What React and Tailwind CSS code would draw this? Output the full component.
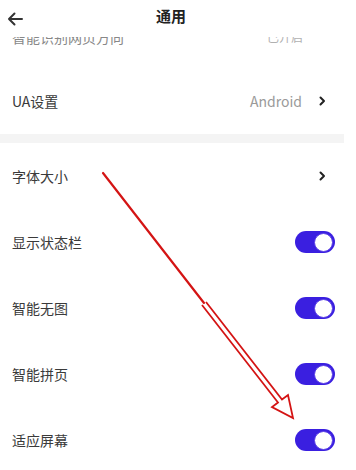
import React from "react";

const font = { fontFamily: '"Noto Sans CJK SC", "Noto Sans", sans-serif' };

function Chevron() {
  return (
    <svg width="7" height="10" viewBox="0 0 7 10" className="ml-[17px] mr-[9px]">
      <path d="M1.5 1.5 L5 5 L1.5 8.5" fill="none" stroke="#222" strokeWidth="2" strokeLinecap="round" strokeLinejoin="round" />
    </svg>
  );
}

function Toggle() {
  return (
    <div className="w-[40px] h-[22px] rounded-full bg-[#3a1fe0] flex items-center justify-end pr-[2px]">
      <div className="w-[19px] h-[19px] rounded-full bg-white border border-[#5a3fe6]" />
    </div>
  );
}

function Row({ label, right }) {
  return (
    <div className="h-[66px] flex items-center justify-between pl-[12px] pr-[21px]">
      <span className="text-[14px] text-[#3a3a3a]">{label}</span>
      {right}
    </div>
  );
}

export default function App() {
  return (
    <div className="relative w-[356px] h-[470px] bg-white overflow-hidden" style={font}>
      <div className="h-[37px] flex items-center relative bg-white">
        <svg width="18" height="16" viewBox="0 0 18 16" className="ml-[6px]">
          <path d="M16 8 H3 M8.5 2.5 L3 8 L8.5 13.5" fill="none" stroke="#333" strokeWidth="2" strokeLinecap="round" strokeLinejoin="round" />
        </svg>
        <span className="absolute left-0 right-0 text-center text-[15px] font-bold text-[#222] pr-[14px] leading-none top-[8px]">通用</span>
      </div>
      <div className="h-[31px] overflow-hidden flex flex-col justify-end">
        <div className="h-[66px] shrink-0 flex items-center justify-between pl-[12px] pr-[21px] pt-[4px]">
          <span className="text-[14px] text-[#888]">智能识别网页方向</span>
          <span className="text-[12px] text-[#b0b0b0] mr-[32px]">已开启</span>
        </div>
      </div>
      <Row
        label="UA设置"
        right={
          <div className="flex items-center">
            <span className="text-[14px] text-[#9a9a9a]">Android</span>
            <Chevron />
          </div>
        }
      />
      <div className="h-[9px] bg-[#f4f4f4] mr-[12px]" />
      <Row label="字体大小" right={<div className="flex items-center"><Chevron /></div>} />
      <Row label="显示状态栏" right={<Toggle />} />
      <Row label="智能无图" right={<Toggle />} />
      <Row label="智能拼页" right={<Toggle />} />
      <Row label="适应屏幕" right={<Toggle />} />
      <svg className="absolute left-0 top-0 pointer-events-none" width="356" height="470" viewBox="0 0 356 470">
        <path d="M103 173 L204 303" stroke="#d41414" strokeWidth="2.2" fill="none" strokeLinecap="round" />
        <path
          d="M202 305 L278 402.5 L272 407 L293 418 L288 395 L282 399.5 L206 302"
          stroke="#d41414"
          strokeWidth="1.8"
          fill="none"
          strokeLinejoin="miter"
        />
      </svg>
    </div>
  );
}
